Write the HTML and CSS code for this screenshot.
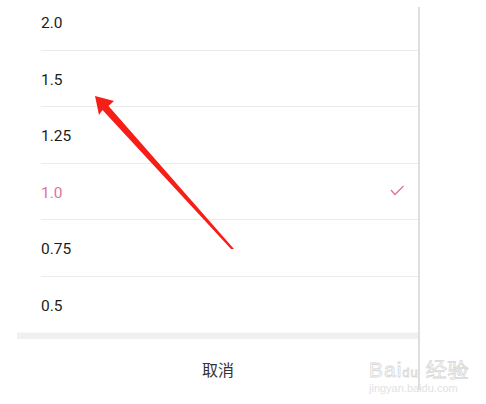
FILE: index.html
```html
<!DOCTYPE html>
<html lang="zh">

<head>
    <meta charset="UTF-8" />
    <meta name="viewport" content="width=device-width, initial-scale=1.0" />
    <title>播放速度</title>
    <link rel="stylesheet" href="styles.css">
</head>

<body>

    <div class="sheet">
        <ul class="speeds">
            <li class="speed">2.0</li>
            <li class="speed">1.5</li>
            <li class="speed">1.25</li>
            <li class="speed active">
                <span>1.0</span>
                <svg class="check" width="15" height="11" viewBox="0 0 15 11">
                    <polyline points="1,5 5,9.5 13.5,1" fill="none" stroke="#e36f9a" stroke-width="1.3" />
                </svg>
            </li>
            <li class="speed">0.75</li>
            <li class="speed last">0.5</li>
        </ul>
        <div class="gap"></div>
        <div class="cancel">取消</div>
    </div>

    <svg class="arrow" width="486" height="404" viewBox="0 0 486 404">
        <polygon fill="#f61e17"
            points="95,96 114,101 108.5,106 234,249 231,249 102.5,110 99,115" />
    </svg>

    <div class="watermark">
        <div class="brand">Bai<span class="paw">du</span> 经验</div>
        <div class="site">jingyan.baidu.com</div>
    </div>

</body>

</html>
```

FILE: styles.css
```css
body {
    margin: 0;
    background: #fff;
    font-family: Roboto, "Noto Sans CJK SC", sans-serif;
    width: 486px;
    height: 404px;
    overflow: hidden;
    position: relative;
}

.sheet {
    display: flow-root;
    margin-left: 17px;
    width: 402px;
    position: relative;
}

.sheet::after {
    content: "";
    position: absolute;
    top: 7px;
    right: -1px;
    width: 2px;
    height: 383px;
    background: #dedede;
}

.speeds {
    list-style: none;
    margin: -6px 0 0 24px;
    padding: 0;
}

.speed {
    height: 52.5px;
    padding-top: 3px;
    border-bottom: 1px solid #ebebeb;
    display: flex;
    align-items: center;
    justify-content: space-between;
    padding-right: 14px;
    font-size: 15.5px;
    color: #1c1c1c;
}

.speed.last {
    border-bottom: none;
}

.speed.active {
    color: #e0729b;
}

.check {
    margin-top: -4px;
}

.gap {
    height: 6px;
    background: #f0f0f2;
    border-top: 1px solid #f7f7f7;
}

.cancel {
    height: 60px;
    padding-bottom: 4px;
    display: flex;
    align-items: center;
    justify-content: center;
    font-family: "Noto Sans CJK SC", sans-serif;
    font-size: 16px;
    color: #333;
}

.arrow {
    position: absolute;
    left: 0;
    top: 0;
}

.watermark {
    position: absolute;
    left: 369px;
    top: 356px;
    color: #fff;
    -webkit-text-stroke: 0.8px #d8d8d8;
    font-family: "Liberation Sans", sans-serif;
}

.brand {
    font-size: 21px;
    letter-spacing: 1px;
}

.paw {
    font-size: 13px;
}

.site {
    font-size: 11px;
    margin-top: -2px;
    -webkit-text-stroke: 0;
    color: #e2e2e2;
}
```
